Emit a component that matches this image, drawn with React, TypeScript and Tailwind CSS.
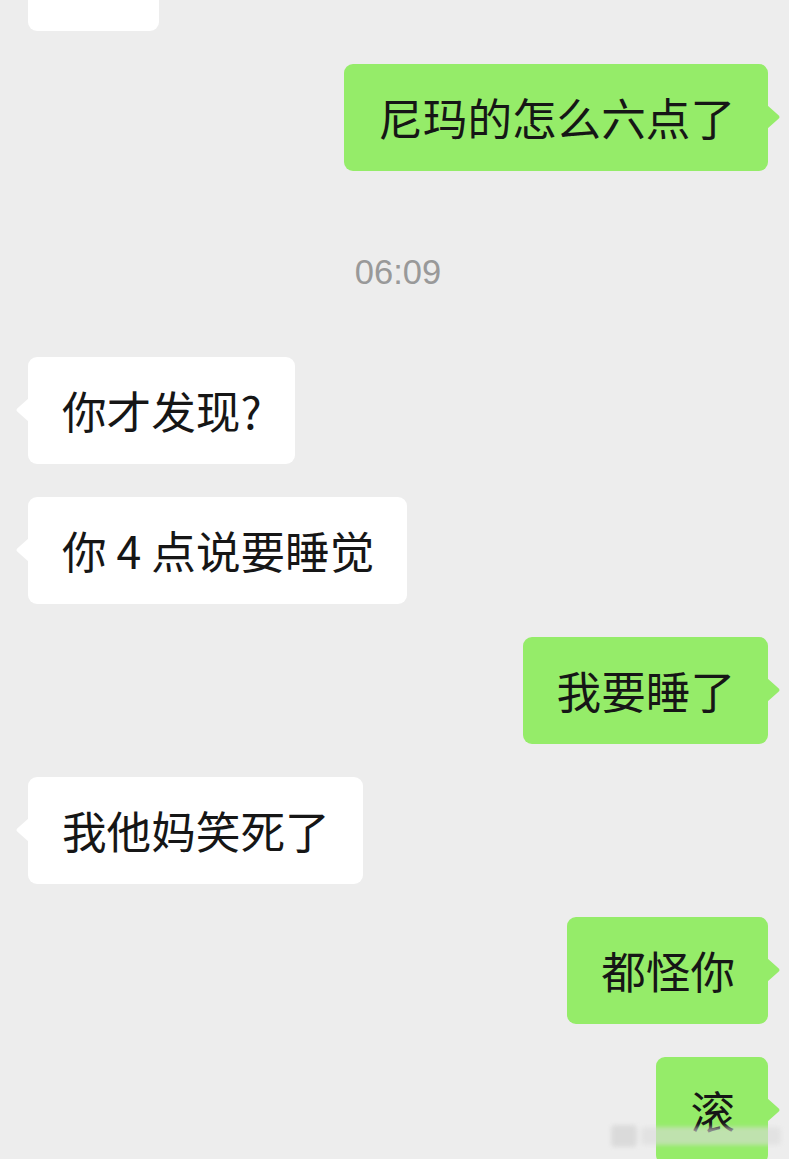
import React from "react"

type Msg =
  | { kind: "in" | "out"; text: string }
  | { kind: "time"; text: string }

const messages: Msg[] = [
  { kind: "out", text: "尼玛的怎么六点了" },
  { kind: "time", text: "06:09" },
  { kind: "in", text: "你才发现?" },
  { kind: "in", text: "你 4 点说要睡觉" },
  { kind: "out", text: "我要睡了" },
  { kind: "in", text: "我他妈笑死了" },
  { kind: "out", text: "都怪你" },
  { kind: "out", text: "滚" },
]

const cjk = { fontFamily: '"Noto Sans CJK SC", "Noto Sans", sans-serif' }

function Tail({ side, color }: { side: "left" | "right"; color: string }) {
  // small arrow on the bubble edge
  return (
    <svg
      width="14"
      height="24"
      viewBox="0 0 14 24"
      className={side === "right" ? "absolute -right-[13px] top-[41px]" : "absolute -left-[13px] top-[41px]"}
    >
      {side === "right" ? (
        <path d="M0 0 L11.5 10.2 Q13.5 12 11.5 13.8 L0 24 Z" fill={color} />
      ) : (
        <path d="M14 0 L2.5 10.2 Q0.5 12 2.5 13.8 L14 24 Z" fill={color} />
      )}
    </svg>
  )
}

function Bubble({ side, text }: { side: "in" | "out"; text: string }) {
  const out = side === "out"
  return (
    <div className={out ? "flex justify-end pr-[21px]" : "flex justify-start pl-[28px]"}>
      <div
        className={
          "relative flex h-[107px] items-center rounded-[9px] pl-[34px] pr-[33px] text-[44.6px] leading-none text-[#161616] " +
          (out ? "bg-[#95ec69]" : "bg-white")
        }
        style={cjk}
      >
        <span className="whitespace-nowrap">{text}</span>
        <Tail side={out ? "right" : "left"} color={out ? "#95ec69" : "#ffffff"} />
      </div>
    </div>
  )
}

export default function App() {
  return (
    <div className="relative h-[1159px] w-[789px] overflow-hidden bg-[#ededed]">
      <div className="flex flex-col gap-[33px]">
        {/* previous message, scrolled mostly out of view */}
        <div className="-mt-[76px] pl-[28px]">
          <div className="h-[107px] w-[131px] rounded-[9px] bg-white" />
        </div>

        {messages.map((m, i) =>
          m.kind === "time" ? (
            <div key={i} className="flex h-[120px] justify-center pl-[7px] pt-[51px]">
              <span
                className="text-[34.5px] leading-[34px] text-[#999999]"
                style={{ fontFamily: '"Liberation Sans", Arial, sans-serif' }}
              >
                {m.text}
              </span>
            </div>
          ) : (
            <Bubble key={i} side={m.kind} text={m.text} />
          )
        )}
      </div>

      {/* faint watermark in the corner */}
      <div className="absolute bottom-[12px] right-[8px] flex items-center gap-1 opacity-60 blur-[2px]">
        <div className="h-[22px] w-[26px] rounded-sm bg-[#cfcfcf]" />
        <div className="h-[18px] w-[140px] rounded-sm bg-[#dcdcdc]" />
      </div>
    </div>
  )
}
